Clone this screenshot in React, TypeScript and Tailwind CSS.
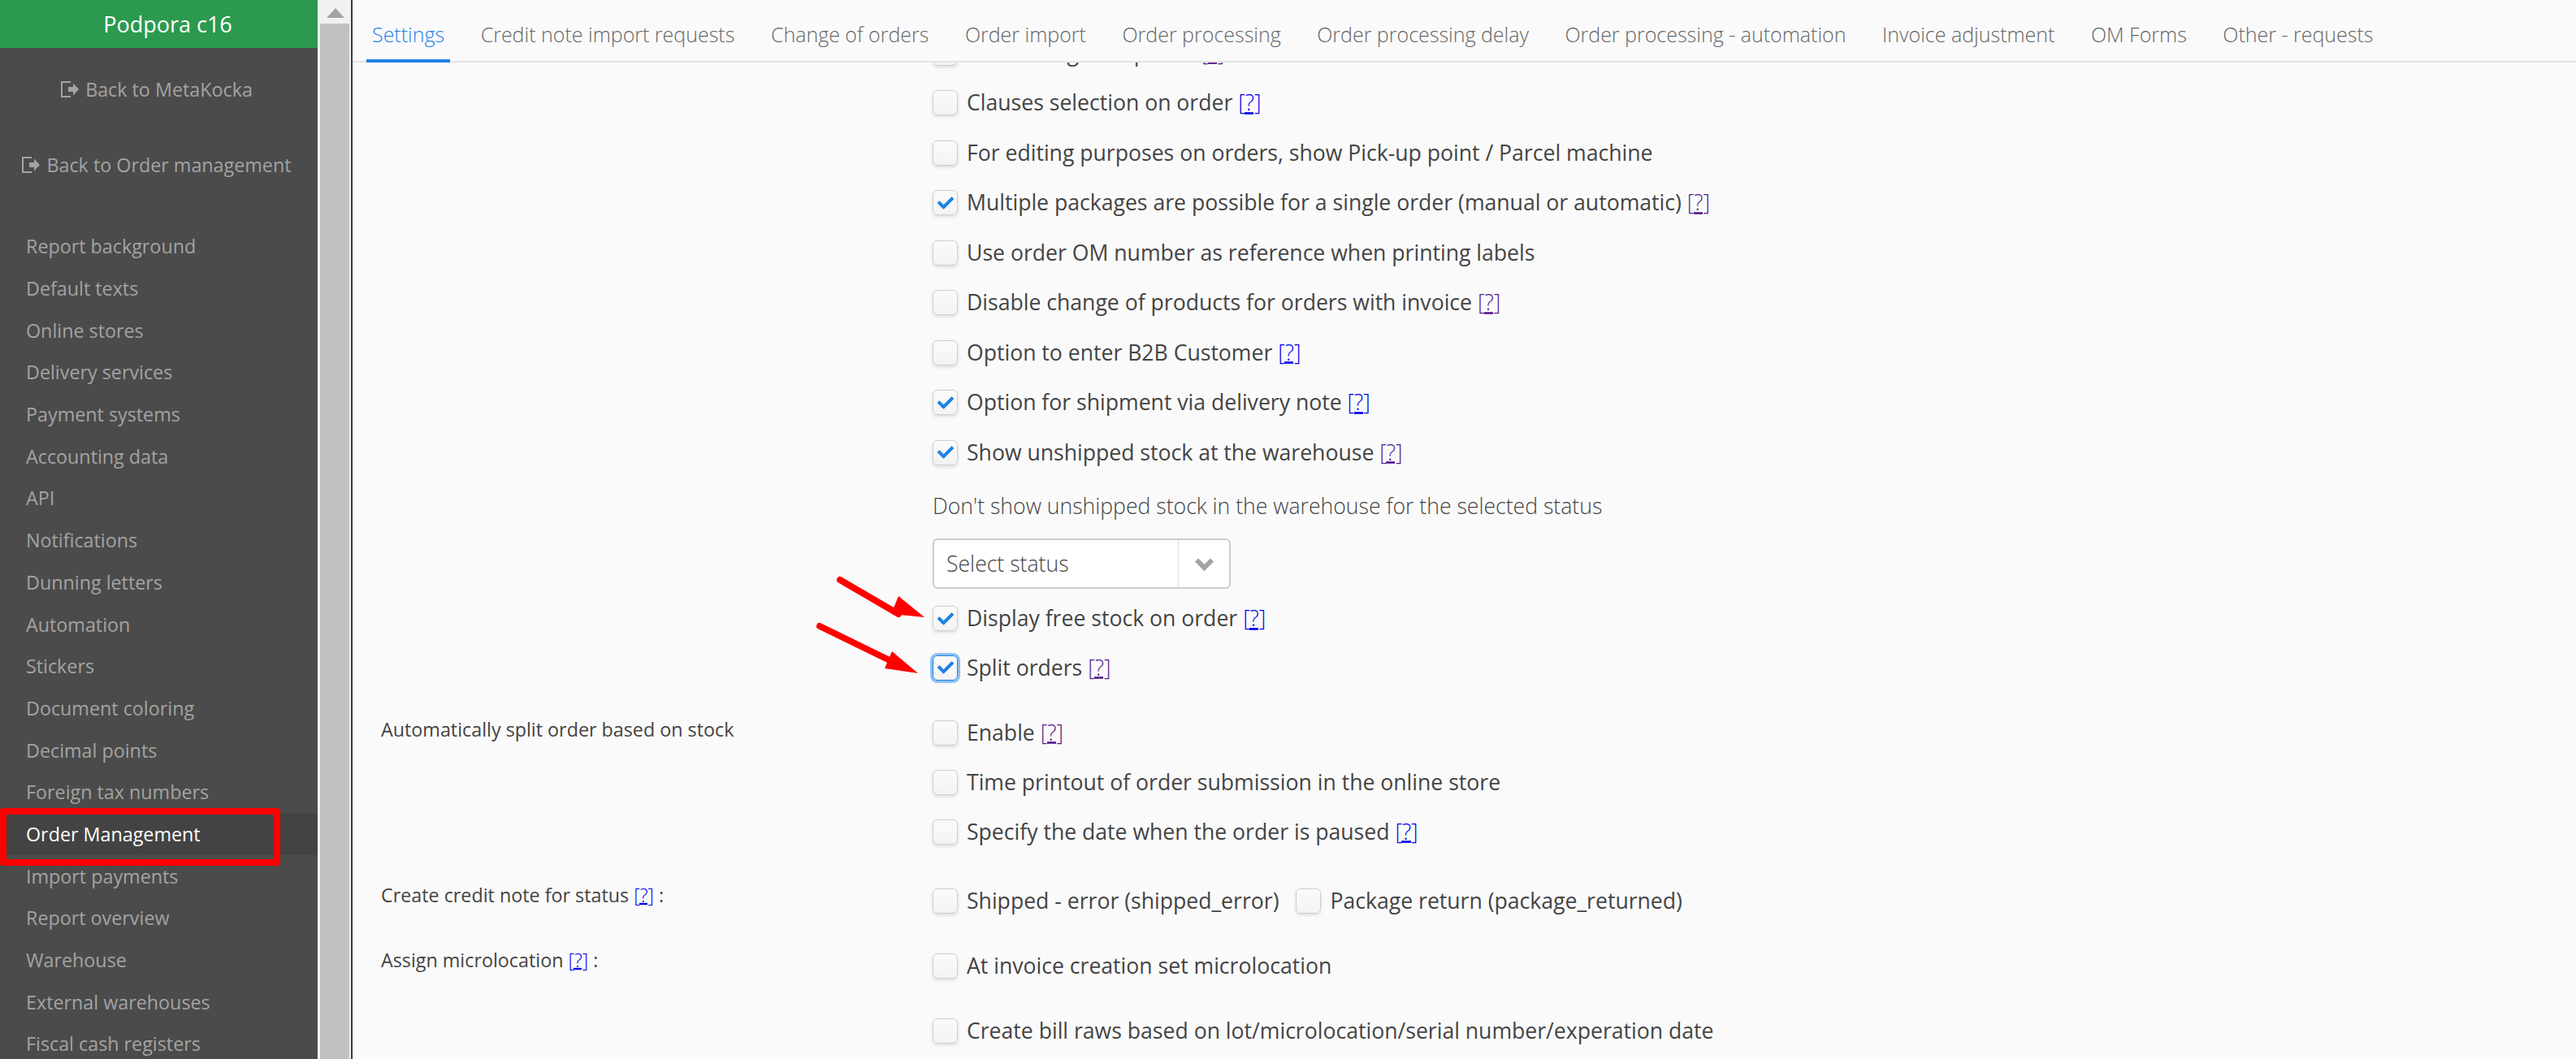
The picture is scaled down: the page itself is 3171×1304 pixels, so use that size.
import { FaCheck } from 'react-icons/fa'

const NAV_ITEMS = [
  'Report background', 'Default texts', 'Online stores', 'Delivery services', 'Payment systems', 'Accounting data',
  'API', 'Notifications', 'Dunning letters', 'Automation', 'Stickers', 'Document coloring', 'Decimal points',
  'Foreign tax numbers', 'Order Management', 'Import payments', 'Report overview', 'Warehouse',
  'External warehouses', 'Fiscal cash registers',
]

const TABS = [
  'Settings', 'Credit note import requests', 'Change of orders', 'Order import', 'Order processing',
  'Order processing delay', 'Order processing - automation', 'Invoice adjustment', 'OM Forms', 'Other - requests',
]

function LogOutIcon() {
  return (
    <svg width="24" height="22" viewBox="0 0 24 22" className="mr-[7px] shrink-0" fill="none">
      <path d="M13 2H2v18h11" stroke="currentColor" strokeWidth="2" />
      <path d="M10 8h6V3.500L23 11l-7 7.500V14h-6z" fill="currentColor" />
    </svg>
  )
}

function Help({ visited }: { visited?: boolean }) {
  return (
    <span className={`font-light ${visited ? 'text-[#551a8b]' : 'text-[#0000ee]'}`}>[<span className="underline decoration-dashed">?</span>]</span>
  )
}

function Check({ checked, focused, label, help }: { checked?: boolean; focused?: boolean; label: string; help?: 'blue' | 'purple' }) {
  return (
    <span className="flex h-[31px] items-center">
      <span
        className={`flex h-[31px] w-[31px] shrink-0 items-center justify-center rounded-[6px] border bg-gradient-to-b from-[#fbfbfb] to-[#f3f3f3] shadow-[0_2px_4px_rgba(0,0,0,0.12)] ${
          focused ? 'border-[#1e82e6] ring-[3px] ring-[#8cc0f2]' : 'border-[#cfcfcf]'
        }`}
      >
        {checked && <FaCheck className="text-[20px] text-[#1e82e6]" />}
      </span>
      <span className="ml-[11px] whitespace-nowrap">
        {label}
        {help && <> <Help visited={help === 'purple'} /></>}
      </span>
    </span>
  )
}

export default function App() {
  return (
    <div className="relative flex h-[1304px] w-[3171px] overflow-hidden bg-[#fafafa] font-['Open_Sans',sans-serif] text-[26.600px] leading-[31px] text-[#444]">
      <aside className="h-full w-[391px] shrink-0 overflow-hidden bg-[#4b4b4b] text-[23.300px] text-[#a3a3a3]">
        <div className="flex h-[59px] items-center justify-center bg-[#2b9a4e] pl-[22px] text-[27px] text-white">Podpora c16</div>
        <div className="mt-[24px] flex h-[54px] items-center justify-center pr-[6px]"><LogOutIcon />Back to MetaKocka</div>
        <div className="mt-[39px] flex h-[54px] items-center justify-center pr-[6px]"><LogOutIcon />Back to Order management</div>
        <nav className="mt-[48px]">
          {NAV_ITEMS.map((item) => (
            <div key={item} className={`flex h-[51.700px] items-center pl-[32px] ${item === 'Order Management' ? 'bg-[#434343] text-white' : ''}`}>
              {item}
            </div>
          ))}
        </nav>
      </aside>

      <div className="flex h-full w-[43px] shrink-0 flex-col border-x-2 border-l-white border-r-[#3a3a3a] bg-[#f1f1f1]">
        <div className="flex h-[29px] items-center justify-center pt-[2px]">
          <svg width="22" height="12" viewBox="0 0 22 12"><path d="M11 0l11 12H0z" fill="#a3a3a3" /></svg>
        </div>
        <div className="mr-[2px] ml-[1px] flex-1 bg-[#c1c1c1]" />
      </div>

      <main className="flex min-w-0 flex-1 flex-col">
        <div className="flex h-[77px] shrink-0 items-center gap-[44.500px] border-b-2 border-[#e4e4e4] pt-[10px] pl-[24px] text-[25px] font-light text-[#666]">
          {TABS.map((tab, i) => (
            <span key={tab} className={`relative whitespace-nowrap ${i === 0 ? 'text-[#1e82e6]' : ''}`}>
              {tab}
              {i === 0 && <span className="absolute -right-[7px] -bottom-[19px] -left-[7px] h-[4px] bg-[#1e82e6]" />}
            </span>
          ))}
        </div>

        <div className="min-h-0 flex-1 overflow-hidden">
          <div className="-mt-[27.500px] grid grid-cols-[679px_1fr] pl-[35px]">
            <div />
            <div className="flex flex-col gap-[30.500px]">
              <Check label="Accounting on a parcel" help="purple" />
              <Check label="Clauses selection on order" help="blue" />
              <Check label="For editing purposes on orders, show Pick-up point / Parcel machine" />
              <Check checked label="Multiple packages are possible for a single order (manual or automatic)" help="purple" />
              <Check label="Use order OM number as reference when printing labels" />
              <Check label="Disable change of products for orders with invoice" help="purple" />
              <Check label="Option to enter B2B Customer" help="blue" />
              <Check checked label="Option for shipment via delivery note" help="blue" />
              <Check checked label="Show unshipped stock at the warehouse" help="purple" />
              <div className="mt-[4.500px] font-light">Don't show unshipped stock in the warehouse for the selected status</div>
              <div className="-mt-[6px] flex h-[62px] w-[367px] items-center rounded-[6px] border-2 border-[#ccc] bg-white font-light">
                <span className="flex-1 pl-[15px]">Select status</span>
                <span className="flex h-full w-[63px] items-center justify-center border-l border-[#ddd]">
                  <svg width="25" height="17" viewBox="0 0 25 17" fill="none">
                    <path d="M3 3.500L12.500 13L22 3.500" stroke="#a3a3a3" strokeWidth="6" />
                  </svg>
                </span>
              </div>
              <div className="-mt-[9.500px]"><Check checked label="Display free stock on order" help="blue" /></div>
              <div className="-mt-[1px]"><Check checked focused label="Split orders" help="purple" /></div>
            </div>

            <div className="mt-[45px] text-[23.300px]">Automatically split order based on stock</div>
            <div className="mt-[49px] flex flex-col gap-[30px]">
              <Check label="Enable" help="purple" />
              <Check label="Time printout of order submission in the online store" />
              <Check label="Specify the date when the order is paused" help="blue" />
            </div>

            <div className="mt-[47px] text-[23.300px]">Create credit note for status <Help /> :</div>
            <div className="mt-[54px] flex gap-[21px]">
              <Check label="Shipped - error (shipped_error)" />
              <Check label="Package return (package_returned)" />
            </div>

            <div className="mt-[42px] text-[23.300px]">Assign microlocation <Help /> :</div>
            <div className="mt-[49px] flex flex-col gap-[49px]">
              <Check label="At invoice creation set microlocation" />
              <Check label="Create bill raws based on lot/microlocation/serial number/experation date" />
            </div>
          </div>
        </div>
      </main>

      <div className="absolute top-[995px] left-0 h-[71px] w-[345px] rounded-[3px] border-[8px] border-[#ff0000]" />

      <svg className="absolute top-0 left-0" width="3171" height="1304" fill="#ff0000" stroke="none">
        <path d="M1034 714L1106 756" stroke="#ff0000" strokeWidth="8" strokeLinecap="round" />
        <path d="M1138 760L1106 734L1097 756z" />
        <path d="M1009 771L1095 813" stroke="#ff0000" strokeWidth="8" strokeLinecap="round" />
        <path d="M1130 829L1098 802L1089 823z" />
      </svg>
    </div>
  )
}
